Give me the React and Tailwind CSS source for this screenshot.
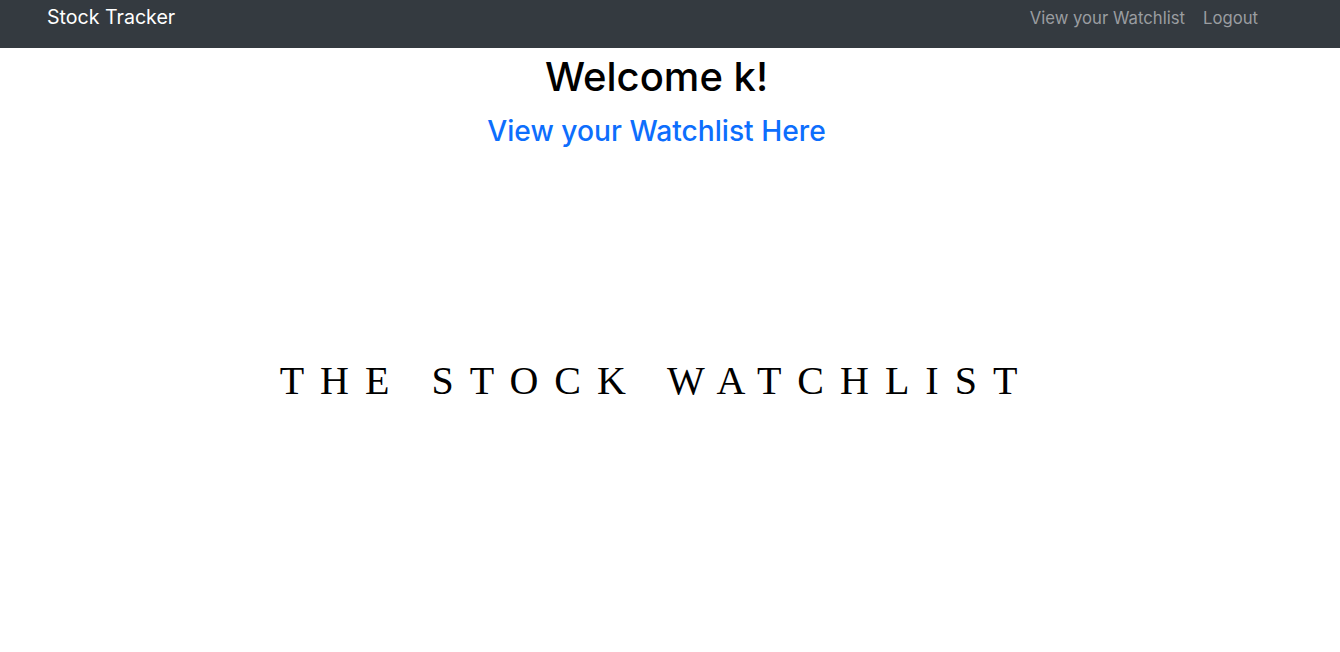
export default function App() {
  return (
    <div className="min-h-[652px] bg-white font-['Inter',sans-serif]">
      {/* Navbar */}
      <nav className="h-12 bg-[#343a40] flex items-start justify-between pl-[47px] pr-[82px]">
        <a href="#" className="text-white text-[19.6px] leading-[30px] mt-[2px]">
          Stock Tracker
        </a>
        <div className="flex gap-[18px] mt-[3px]">
          <a href="#" className="text-[#9a9da0] text-[16.7px] leading-[30px]">
            View your Watchlist
          </a>
          <a href="#" className="text-[#9a9da0] text-[16.7px] leading-[30px]">
            Logout
          </a>
        </div>
      </nav>

      {/* Welcome */}
      <div className="flex flex-col items-center pr-[27px]">
        <h1 className="text-[40px] leading-[48px] font-medium text-black mt-[5px]">
          Welcome k!
        </h1>
        <a href="#" className="text-[28.2px] leading-[34px] font-medium text-[#0d6efd] mt-[13px]">
          View your Watchlist Here
        </a>
      </div>

      {/* Title */}
      <div className="flex justify-center pt-[209px] pr-[27px]">
        <h2 className="font-['Liberation_Serif',serif] text-[40px] leading-[48px] tracking-[16px] text-black">
          THE STOCK WATCHLIST
        </h2>
      </div>
    </div>
  );
}
